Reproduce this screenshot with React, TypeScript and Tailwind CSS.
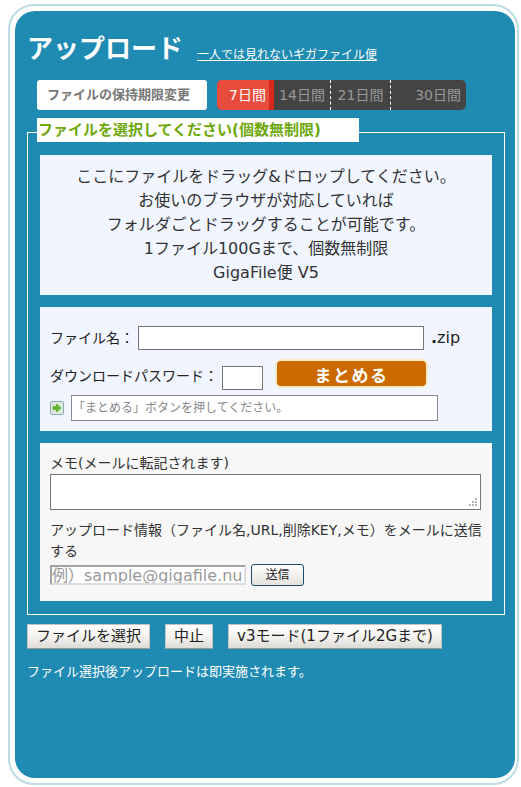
import React from "react";

const font = { fontFamily: '"DejaVu Sans", "Noto Sans CJK JP", sans-serif' };

function Btn({ children, className = "" }: { children: React.ReactNode; className?: string }) {
  return (
    <button className={"h-[25px] border border-[#c4c4c4] border-b-[#9a9a9a] bg-gradient-to-b from-white via-[#f4f3f0] to-[#dddbd6] text-[15px] leading-none text-[#222] whitespace-nowrap " + className}>
      {children}
    </button>
  );
}

export default function App() {
  return (
    <div className="w-[521px] h-[787px] bg-white overflow-hidden pt-[4px] pl-[8px]" style={font}>
      <div className="w-[511px] h-[781px] rounded-[26px] border-2 border-[#bcdbe3] p-[5px]">
        <div className="h-full w-[500px] rounded-[20px] bg-[#1f8bb3] pl-[12px] pt-[20px]">
          <div className="flex items-end h-[36px]">
            <h1 className="text-[26px] leading-[36px] font-bold text-white">アップロード</h1>
            <a className="ml-[14px] mb-[3px] text-[12px] leading-[18px] text-white underline">一人では見れないギガファイル便</a>
          </div>
          <div className="flex mt-[13px] ml-[10px] h-[30px]">
            <div className="w-[170px] rounded-[3px] bg-white flex items-center pl-[10px] text-[13px] font-bold text-[#777] whitespace-nowrap">ファイルの保持期限変更</div>
            <div className="ml-[10px] flex w-[249px] rounded-[5px] overflow-hidden bg-[#444] text-[14px] text-[#999]">
              <div className="w-[57px] bg-[#e74c3c] border-r-[5px] border-[#d9271a] text-white flex items-center justify-center pl-[9px]">7日間</div>
              <div className="w-[57px] border-r border-dashed border-white flex items-center justify-center">14日間</div>
              <div className="w-[60px] border-r border-dashed border-white flex items-center justify-center">21日間</div>
              <div className="flex-1 flex items-center justify-end pr-[5px]">30日間</div>
            </div>
          </div>
          <fieldset className="mt-[10px] w-[478px] h-[495px] border border-white px-[12px]">
            <legend className="relative -top-[2px] -ml-[3px] w-[322px] h-[24px] bg-white text-[15px] leading-[24px] font-bold text-[#6fa80c] whitespace-nowrap pl-[1px]">ファイルを選択してください(個数無制限)</legend>
            <div className="mt-[11px] h-[140px] bg-[#f0f5ff] flex flex-col items-center justify-center text-[16px] leading-[24px] text-[#333]">
              <p>ここにファイルをドラッグ&ドロップしてください。</p>
              <p>お使いのブラウザが対応していれば</p>
              <p>フォルダごとドラッグすることが可能です。</p>
              <p>1ファイル100Gまで、個数無制限</p>
              <p>GigaFile便 V5</p>
            </div>
            <div className="mt-[12px] h-[124px] bg-[#f0f5ff] pl-[10px] pt-[19px] text-[14px] text-[#222]">
              <div className="flex items-center h-[24px]">
                <span className="w-[88px]">ファイル名：</span>
                <input className="w-[286px] h-[24px] bg-white border border-[#767676]" />
                <span className="ml-[7px] text-[16px]"><b>.</b>zip</span>
              </div>
              <div className="flex items-end mt-[9px] h-[31px]">
                <span className="w-[172px] leading-[24px] pb-[2px]">ダウンロードパスワード：</span>
                <input className="w-[41px] h-[24px] bg-white border border-[#767676]" />
                <button className="self-start ml-[12px] w-[153px] h-[29px] pt-[5px] leading-[20px] rounded-[6px] border-2 border-[#fbe9c8] bg-[#cc6a00] text-white font-bold text-[17px] tracking-[1.5px]">まとめる</button>
              </div>
              <div className="flex items-center h-[26px] mt-[5px]">
                <svg width="14" height="14" viewBox="0 0 14 14" className="mr-[7px] shrink-0">
                  <rect x="0.5" y="0.5" width="13" height="13" rx="1" fill="#dcebd8" stroke="#8fa6b8" />
                  <path d="M3 5.5h3.5V3L11 7l-4.5 4V8.5H3z" fill="#5fb82a" stroke="#3f8a1a" strokeWidth="0.5" />
                </svg>
                <div className="w-[367px] h-[26px] bg-white border border-[#8a8a8a] pl-[1px] text-[12px] leading-[24px] text-[#888]">「まとめる」ボタンを押してください。</div>
              </div>
            </div>
            <div className="mt-[12px] h-[158px] bg-[#f7f7f7] pl-[10px] pt-[10px] text-[14px] text-[#333]">
              <div className="leading-[21px]">メモ(メールに転記されます)</div>
              <div className="relative w-[431px] h-[36px]">
                <textarea className="block w-full h-full bg-white border border-[#767676] resize-none" />
                <svg width="9" height="9" viewBox="0 0 9 9" className="absolute right-[3px] bottom-[3px]">
                  <g fill="#b5b5b5">
                    <rect x="6" y="0" width="2" height="2" />
                    <rect x="3" y="3" width="2" height="2" />
                    <rect x="6" y="3" width="2" height="2" />
                    <rect x="0" y="6" width="2" height="2" />
                    <rect x="3" y="6" width="2" height="2" />
                    <rect x="6" y="6" width="2" height="2" />
                  </g>
                </svg>
              </div>
              <p className="w-[434px] mt-[10px] leading-[21px]">アップロード情報（ファイル名,URL,削除KEY,メモ）をメールに送信する</p>
              <div className="flex items-center mt-[2px]">
                <input placeholder="例）sample@gigafile.nu" className="w-[196px] h-[20px] bg-white border-2 border-[#a3a3a3] border-b-[#ddd] border-r-[#ddd] text-[16px] leading-none placeholder:text-[#999]" />
                <button className="ml-[5px] w-[53px] h-[22px] rounded-[3px] border border-[#1c4a6e] bg-gradient-to-b from-white to-[#e4e2dc] text-[12px] leading-none text-[#222]">送信</button>
              </div>
            </div>
          </fieldset>
          <div className="flex mt-[9px] gap-[15px]">
            <Btn className="w-[123px]">ファイルを選択</Btn>
            <Btn className="w-[48px]">中止</Btn>
            <Btn className="w-[214px]">v3モード(1ファイル2Gまで)</Btn>
          </div>
          <p className="mt-[13px] text-[13px] leading-[20px] text-white">ファイル選択後アップロードは即実施されます。</p>
        </div>
      </div>
    </div>
  );
}
